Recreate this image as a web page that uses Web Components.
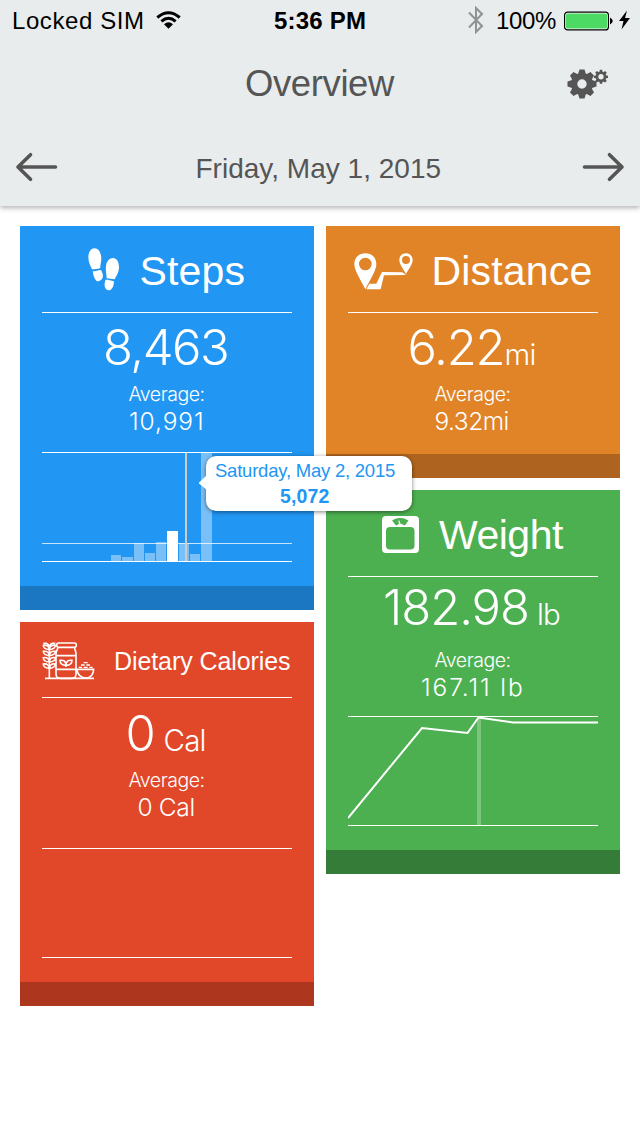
<!DOCTYPE html>
<html lang="en">
<head>
<meta charset="utf-8">
<title>Overview</title>
<style>
html,body{margin:0;padding:0;background:#fff;width:640px;height:1136px;overflow:hidden}
</style>
</head>
<body>
<health-app></health-app>
<script>
// Text whose box is exactly its ink width; w sets that width through letter spacing.
class FitText extends HTMLElement{
  connectedCallback(){
    const a=n=>this.getAttribute(n);
    const size=a('size'),weight=a('weight')||400,family=a('family')||'Liberation Sans',text=a('text');
    const root=this.attachShadow({mode:'open'});
    const ctx=document.createElement('canvas').getContext('2d');
    ctx.font=`${weight} ${size}px "${family}"`;
    const m=ctx.measureText(text);
    const ink=m.actualBoundingBoxLeft+m.actualBoundingBoxRight;
    const w=+a('w'),ls=text.length>1?(w-ink)/(text.length-1):0;
    root.innerHTML=`<style>:host{display:block;flex:none;width:${w}px;line-height:${a('lh')||size}px;white-space:pre}
      span{display:block;margin-left:${m.actualBoundingBoxLeft}px;font:${weight} ${size}px "${family}",sans-serif;line-height:inherit;letter-spacing:${ls}px;width:max-content}</style><span></span>`;
    root.querySelector('span').textContent=text;
  }
}
customElements.define('fit-text',FitText);

const ICONS={
 steps:`<svg style="margin-top:-2px" width="32" height="44" viewBox="24 24 96 132" fill="#fff"><path d="M44 25C32 25 25 38 25 52C25 66 31 77 36 88C44 88 52 87 61 84C60 76 64 68 64 54C63 37 55 25 44 25ZM38 94C46 94 55 91 63 90C67 98 70 104 68 113C64 122 55 126 49 122C42 116 40 105 38 94ZM99 54C87 54 79 65 78 79C76 92 80 104 80 115C88 115 95 118 104 118C108 109 116 99 117 83C117 65 110 54 99 54ZM77 119C85 119 94 121 102 124C101 134 100 145 91 150C82 153 75 147 74 138C73 131 75 124 77 119Z"/></svg>`,
 distance:`<svg width="59" height="37" viewBox="27 38 177 111" fill="#fff"><path fill-rule="evenodd" d="M61 39C41 39 28 52 28 72C28 91 46 116 61 147C76 116 94 91 94 72C94 52 81 39 61 39ZM61 52A19 19 0 1 1 61 90A19 19 0 1 1 61 52ZM183 39C170 39 163 48 163 59C163 72 174 84 183 101C192 84 203 72 203 59C203 48 195 39 183 39ZM183 47A12 12 0 1 1 183 71A12 12 0 1 1 183 47Z"/><path d="M64 147L73 130L94 130L111 95L172 96L183 104L117 105L107 147Z"/></svg>`,
 weight:`<svg style="margin-top:-2px" width="37" height="37" viewBox="0 0 37 37"><rect width="37" height="37" rx="4" fill="#fff"/><rect x="4" y="11" width="28.5" height="22.5" rx="4" fill="#4db050"/><path d="M10 4.500Q18 -0.300 26.500 4.500L23 9.500Q18 7.200 14 9.500Z" fill="#4db050"/><path d="M18 9L16.800 4.600" stroke="#fff" stroke-width="1.2"/><circle cx="18.2" cy="9.3" r="1.800" fill="#fff"/></svg>`,
 diet:`<svg style="margin-bottom:2px" width="53" height="38" viewBox="21 21 159 114" fill="none" stroke="#fff" stroke-width="4.800"><path d="M30 130H177M43 38V130"/><path d="M43 44C31 43 25 38 25 31C36 29 43 35 43 44C43 35 50 29 61 31C61 38 55 43 43 44ZM43 62C31 61 25 56 25 49C36 47 43 53 43 62C43 53 50 47 61 49C61 56 55 61 43 62ZM43 81C31 80 25 75 25 68C36 66 43 72 43 81C43 72 50 66 61 68C61 75 55 80 43 81ZM43 100C31 99 25 94 25 87C36 85 43 91 43 100C43 91 50 85 61 87C61 94 55 99 43 100ZM25 25H33Q41 27 43 36Q45 27 53 25H61"/><rect x="65" y="24" width="59" height="13" rx="6"/><path d="M68 38C68 47 63 47 63 56V117Q63 130 76 130H111Q123 130 123 117V56C123 47 119 47 119 38M63 62H123M63 103H123M93 96V81M93 91C80 91 75 84 75 76C87 74 93 80 93 91C93 80 99 74 111 76C111 84 106 91 93 91ZM126 103H176C176 117 167 129 152 129C137 129 126 117 126 103Z"/><path stroke-width="4" d="M131 97H141M146 97H158M163 97H173M138 90H149M154 90H165M146 83H158"/></svg>`
};

// One tile: icon and title, main value with unit, average, chart slot, darker foot.
class MetricCard extends HTMLElement{
  connectedCallback(){
    const d=this.dataset;
    const L='family="Inter" weight="300"';
    this.attachShadow({mode:'open'}).innerHTML=`<style>
      :host{display:flex;flex-direction:column;box-sizing:border-box;height:${d.h}px;background:${d.bg};color:#fff}
      .in{padding:0 22px}
      header{display:flex;justify-content:center;align-items:center;box-sizing:border-box;padding:4px ${d.hp||2}px 0 0;height:${+d.head+1}px;gap:${d.gap}px;border-bottom:1px solid #fff}
      header svg{display:block;flex:none}
      .value{display:flex;justify-content:center;align-items:baseline;height:${d.vh}px;gap:${d.ugap||0}px;padding-right:1px}
      .avg{display:flex;flex-direction:column;align-items:center;margin-top:${d.am||0}px;padding-right:2px}
      slot{display:block;margin-top:${d.cm||0}px}
      footer{margin-top:auto;height:24px;background:${d.foot}}
    </style>
    <div class="in"><header>${ICONS[d.icon]}<fit-text text="${d.title}" size="${d.ts}" w="${d.tw}"></fit-text></header>
    <div class="value"><fit-text ${L} text="${d.value}" size="49" w="${d.vw}" lh="${d.vh}"></fit-text>${d.unit?`<fit-text ${L} text="${d.unit}" size="29.5" w="${d.uw}"></fit-text>`:''}</div>
    <div class="avg"><fit-text ${L} text="Average:" size="19.5" w="75" lh="22"></fit-text><fit-text ${L} text="${d.avg}" size="24.5" w="${d.aw}" lh="33"></fit-text></div>
    <slot></slot></div><footer></footer>`;
  }
}
customElements.define('metric-card',MetricCard);

class MetricChart extends HTMLElement{
  connectedCallback(){
    const k=this.getAttribute('kind');
    let g='';
    if(k==='bars'){
      g=[[69,10,103],[80,11,105],[92,10,91],[103,10,101],[114,10,90],[125,11,79],[137,10,91],[148,10,102],[159,11,1]]
        .map(([x,w,y],i)=>`<rect x="${x}" y="${y}" width="${w}" height="${109-y}" fill="#fff" fill-opacity="${i===5?1:.4}"/>`).join('')
        +'<rect y="91" width="250" height="1" fill="#fff" fill-opacity=".75"/><rect x="143" y="1" width="2" height="108" fill="#ccc"/>';
    }
    if(k==='line') g='<rect x="129" y="3" width="4" height="106" fill="#fff" fill-opacity=".27"/><path d="M0 102L74 12L119.500 17L130.500 1.500L165 6.500H250" fill="none" stroke="#fff" stroke-width="2"/>';
    this.attachShadow({mode:'open'}).innerHTML=`<style>:host{display:block;height:110px}svg{display:block}</style><svg width="250" height="110">${g}<rect width="250" height="1" fill="#fff"/><rect y="109" width="250" height="1" fill="#fff"/></svg>`;
  }
}
customElements.define('metric-chart',MetricChart);

class ChartTip extends HTMLElement{
  connectedCallback(){
    this.attachShadow({mode:'open'}).innerHTML=`<style>
      :host{position:absolute;left:206px;top:456px;width:206px;height:55px;box-sizing:border-box;padding:3px 0 0 9px;background:#fff;border-radius:10px;color:#2196f3;box-shadow:0 1px 4px rgba(0,0,0,.5)}
      svg{position:absolute;left:-8px;top:19px}
      .n{margin-left:65px}
    </style><svg width="9" height="16"><path d="M9 0L1 7.500V8.500L9 15Z" fill="#fff"/></svg>
    <fit-text text="Saturday, May 2, 2015" size="18.5" w="180" lh="24"></fit-text>
    <fit-text class="n" text="5,072" size="19.5" weight="700" w="49.5" lh="27"></fit-text>`;
  }
}
customElements.define('chart-tip',ChartTip);

class StatusBar extends HTMLElement{
  connectedCallback(){
    this.attachShadow({mode:'open'}).innerHTML=`<style>
      :host{display:grid;grid-template-columns:1fr 92px 1fr;align-items:center;height:40px;color:#000}
      div{display:flex;align-items:center;height:40px}svg{display:block;flex:none}
      .l{padding-left:13px;gap:13px}.r{justify-content:flex-end;padding-right:9px}
      fit-text{margin-top:1px}
    </style>
    <div class="l"><fit-text text="Locked SIM" size="24" w="130"></fit-text>
    <svg width="25" height="18" viewBox="0 0 25 18" fill="none" stroke="#000" stroke-width="3"><path d="M1.300 6.500Q12.500 -3 23.700 6.500M5.400 10.300Q12.500 4.300 19.600 10.300"/><path d="M8 13.200Q12.500 9.500 17 13.200L12.500 17.800Z" fill="#000" stroke="none"/></svg></div>
    <fit-text text="5:36 PM" size="24" weight="700" w="91"></fit-text>
    <div class="r"><svg width="16" height="28" viewBox="0 0 16 28" fill="none" stroke="#8f9293" stroke-width="2"><path d="M1 6.500L14 20L8 26V2L14 8L1 21.500"/></svg>
    <fit-text style="margin-left:13px" text="100%" size="24" w="59"></fit-text>
    <svg style="margin:1px 0 0 8px" width="50" height="20" viewBox="0 0 50 20"><rect x=".6" y="1.100" width="43.800" height="17.800" rx="3" fill="#fff" stroke="#000" stroke-width="1.200"/><rect x="2" y="2.500" width="41" height="15" rx="1.500" fill="#4cd964"/><path d="M46 6.500Q51.500 10 46 13.500Z"/></svg>
    <svg style="margin-left:4px" width="13" height="20" viewBox="0 0 13 20"><path d="M9 .5L1 11H5.500L3.500 19.500L12 8H7Z"/></svg></div>`;
  }
}
customElements.define('status-bar',StatusBar);

const gear=(x,y,r,body,hole,tw)=>{
  let t='';
  for(let i=0;i<8;i++) t+=`<path transform="rotate(${i*45} ${x} ${y})" d="M${x-tw} ${y-body+2}L${x-tw*.6} ${y-r}H${x+tw*.6}L${x+tw} ${y-body+2}Z" fill="#555"/>`;
  return t+`<circle cx="${x}" cy="${y}" r="${(body+hole)/2}" fill="none" stroke="#555" stroke-width="${body-hole}"/>`;
};
class AppHeader extends HTMLElement{
  connectedCallback(){
    this.attachShadow({mode:'open'}).innerHTML=`<style>
      :host{display:block;height:206px;background:#e8eced;color:#555;box-shadow:0 2px 5px rgba(0,0,0,.3)}
      .t{display:grid;grid-template-columns:246px 1fr 73px;align-items:center;height:87px}
      .t fit-text{margin-top:2px}
      .d fit-text{margin-top:3px}
      .d{display:flex;justify-content:space-between;align-items:center;height:80px;padding:0 15px}
      svg{display:block}
    </style><status-bar></status-bar>
    <div class="t"><i></i><fit-text text="Overview" size="36.5" w="149"></fit-text><svg width="42" height="30" viewBox="0 0 42 30">${gear(15,15,14.5,11,4.7,4.2)}${gear(34,7.8,7,5.2,2.7,1.9)}</svg></div>
    <div class="d"><svg width="43" height="30" viewBox="0 0 43 30" fill="none" stroke="#555" stroke-width="3.600" stroke-linecap="round" stroke-linejoin="round"><path d="M40.500 15H3M15.500 2.700L3 15L15.500 27.300"/></svg>
    <fit-text style="margin-right:2px" text="Friday, May 1, 2015" size="28" w="243"></fit-text>
    <svg width="43" height="30" viewBox="0 0 43 30" fill="none" stroke="#555" stroke-width="3.600" stroke-linecap="round" stroke-linejoin="round"><path d="M2.500 15H40M27.500 2.700L40 15L27.500 27.300"/></svg></div>`;
  }
}
customElements.define('app-header',AppHeader);

class HealthApp extends HTMLElement{
  connectedCallback(){
    this.attachShadow({mode:'open'}).innerHTML=`<style>
      :host{display:block;position:relative;width:640px;height:1136px;background:#fff}
      main{display:grid;grid-template-columns:294px 294px;gap:12px;padding:20px;align-items:start}
      section{display:grid;grid-template-columns:294px;gap:12px}
    </style><app-header></app-header>
    <main><section>
      <metric-card data-icon="steps" data-title="Steps" data-ts="41" data-tw="104" data-gap="21" data-h="384" data-head="86" data-bg="#2196f3" data-foot="#1b77c1" data-value="8,463" data-vw="121" data-vh="70" data-avg="10,991" data-aw="72" data-cm="14"><metric-chart kind="bars"></metric-chart></metric-card>
      <metric-card data-icon="diet" data-title="Dietary Calories" data-ts="25" data-tw="174" data-gap="21" data-h="384" data-head="75" data-bg="#e14729" data-foot="#ad361f" data-value="0" data-vw="24" data-vh="72" data-am="-1" data-unit="Cal" data-uw="40" data-ugap="12" data-avg="0 Cal" data-aw="55" data-cm="24"><metric-chart></metric-chart></metric-card>
    </section><section>
      <metric-card data-icon="distance" data-title="Distance" data-ts="41" data-tw="156" data-gap="22" data-h="252" data-head="86" data-bg="#e08427" data-foot="#ae641e" data-value="6.22" data-vw="92" data-vh="70" data-unit="mi" data-uw="28" data-ugap="4" data-avg="9.32mi" data-aw="73"></metric-card>
      <metric-card data-icon="weight" data-title="Weight" data-ts="41" data-tw="125" data-gap="20" data-hp="0.1" data-h="384" data-head="86" data-bg="#4db050" data-foot="#357c38" data-value="182.98" data-vw="142" data-vh="62" data-unit="lb" data-uw="21" data-ugap="12" data-avg="167.11 lb" data-aw="100" data-am="10" data-cm="12"><metric-chart kind="line"></metric-chart></metric-card>
    </section></main>
    <chart-tip></chart-tip>`;
  }
}
customElements.define('health-app',HealthApp);
</script>
</body>
</html>
